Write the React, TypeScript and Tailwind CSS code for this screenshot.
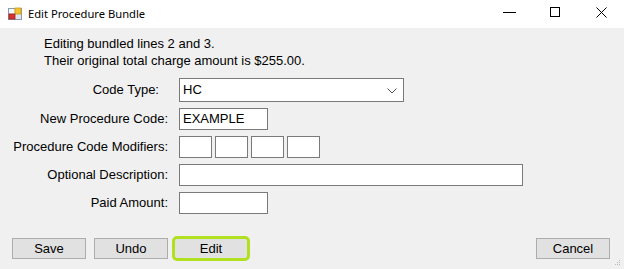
import React from "react";

const F = { fontFamily: '"Liberation Sans", Arial, sans-serif' };

function AppIcon() {
  return (
    <svg width="16" height="16" viewBox="0 0 16 16" className="block">
      <rect x="1.5" y="2.5" width="13" height="11" fill="#dfe6ee" stroke="#8a9bb0" />
      <rect x="8" y="2" width="6" height="6" fill="#f4c430" stroke="#c99a10" strokeWidth="0.8" />
      <rect x="2" y="8" width="6" height="5" fill="#d9342b" stroke="#9c1f1a" strokeWidth="0.8" />
      <rect x="2" y="3" width="5" height="4" fill="#f5f7fa" />
    </svg>
  );
}

function Box({ w, h = 22, children }: { w: number | string; h?: number; children?: React.ReactNode }) {
  return (
    <div
      className="bg-white border border-[#7a7a7a] flex items-center pl-[3px] text-[13px] text-black"
      style={{ width: w, height: h }}
    >
      {children}
    </div>
  );
}

function Btn({ children }: { children: React.ReactNode }) {
  return (
    <div className="w-[74px] h-[21px] bg-[#e1e1e1] border border-[#adadad] flex items-center justify-center text-[13px] text-black">
      {children}
    </div>
  );
}

export default function App() {
  return (
    <div className="w-[624px] h-[269px] bg-[#f0f0f0] overflow-hidden flex flex-col" style={F}>
      <div className="h-[28px] bg-white flex items-center shrink-0">
        <div className="pl-[7px] pr-[5px]">
          <AppIcon />
        </div>
        <div className="text-[11.2px] text-black" style={{ fontFamily: '"Noto Sans", "Open Sans", sans-serif' }}>
          Edit Procedure Bundle
        </div>
        <div className="ml-auto flex items-center h-full">
          <div className="w-[46px] h-full flex items-center justify-center">
            <div className="w-[13px] h-px bg-black mt-[-4px]" />
          </div>
          <div className="w-[46px] h-full flex items-center justify-center">
            <div className="w-[10px] h-[10px] border border-black mt-[-4px]" />
          </div>
          <div className="w-[46px] h-full flex items-center justify-center">
            <svg width="11" height="11" viewBox="0 0 11 11" className="mt-[-4px]">
              <path d="M0.5 0.5 L10.5 10.5 M10.5 0.5 L0.5 10.5" stroke="#000" strokeWidth="1" />
            </svg>
          </div>
        </div>
      </div>

      <div className="flex flex-col flex-1 relative">
        <div className="pl-[44px] pt-[7px] text-[13px] leading-[17px] text-black">
          <div>Editing bundled lines 2 and 3.</div>
          <div>Their original total charge amount is $255.00.</div>
        </div>

        <div className="grid grid-cols-[168px_1fr] gap-x-[11px] mt-[9px] text-[13px] text-black">
          <div className="h-[24px] flex items-center justify-end pr-[9px]">Code Type:</div>
          <div className="w-[225px] h-[24px] bg-white border border-[#7a7a7a] flex items-center pl-[3px] text-[13px]">
            <span>HC</span>
            <svg width="10" height="6" viewBox="0 0 10 6" className="ml-auto mr-[6px] mt-[2px]">
              <path d="M0.5 0.5 L5 5 L9.5 0.5" stroke="#555" fill="none" strokeWidth="1" />
            </svg>
          </div>

          <div className="h-[22px] mt-[6px] flex items-center justify-end">New Procedure Code:</div>
          <div className="mt-[6px]">
            <Box w={89}>EXAMPLE</Box>
          </div>

          <div className="h-[22px] mt-[6px] flex items-center justify-end">Procedure Code Modifiers:</div>
          <div className="mt-[6px] flex gap-[3px]">
            <Box w={33} />
            <Box w={33} />
            <Box w={33} />
            <Box w={33} />
          </div>

          <div className="h-[22px] mt-[6px] flex items-center justify-end">Optional Description:</div>
          <div className="mt-[6px]">
            <Box w={344} />
          </div>

          <div className="h-[22px] mt-[6px] flex items-center justify-end">Paid Amount:</div>
          <div className="mt-[6px]">
            <Box w={89} />
          </div>
        </div>

        <div className="flex items-center mt-[22px] pl-[12px] pr-[14px]">
          <Btn>Save</Btn>
          <div className="ml-[8px]">
            <Btn>Undo</Btn>
          </div>
          <div className="ml-[4px] w-[78px] h-[25px] rounded-[5px] border-[3px] border-[#b0e01f] bg-[#e1e1e1] flex items-center justify-center text-[13px] text-black">
            Edit
          </div>
          <div className="ml-auto">
            <Btn>Cancel</Btn>
          </div>
        </div>

        <svg width="6" height="6" viewBox="0 0 6 6" className="absolute right-[3px] bottom-[3px]">
          <rect x="4" y="0" width="1" height="1" fill="#b8b8b8" />
          <rect x="2" y="2" width="1" height="1" fill="#b8b8b8" />
          <rect x="4" y="2" width="1" height="1" fill="#b8b8b8" />
          <rect x="0" y="4" width="1" height="1" fill="#b8b8b8" />
          <rect x="2" y="4" width="1" height="1" fill="#b8b8b8" />
          <rect x="4" y="4" width="1" height="1" fill="#b8b8b8" />
        </svg>
      </div>
    </div>
  );
}
